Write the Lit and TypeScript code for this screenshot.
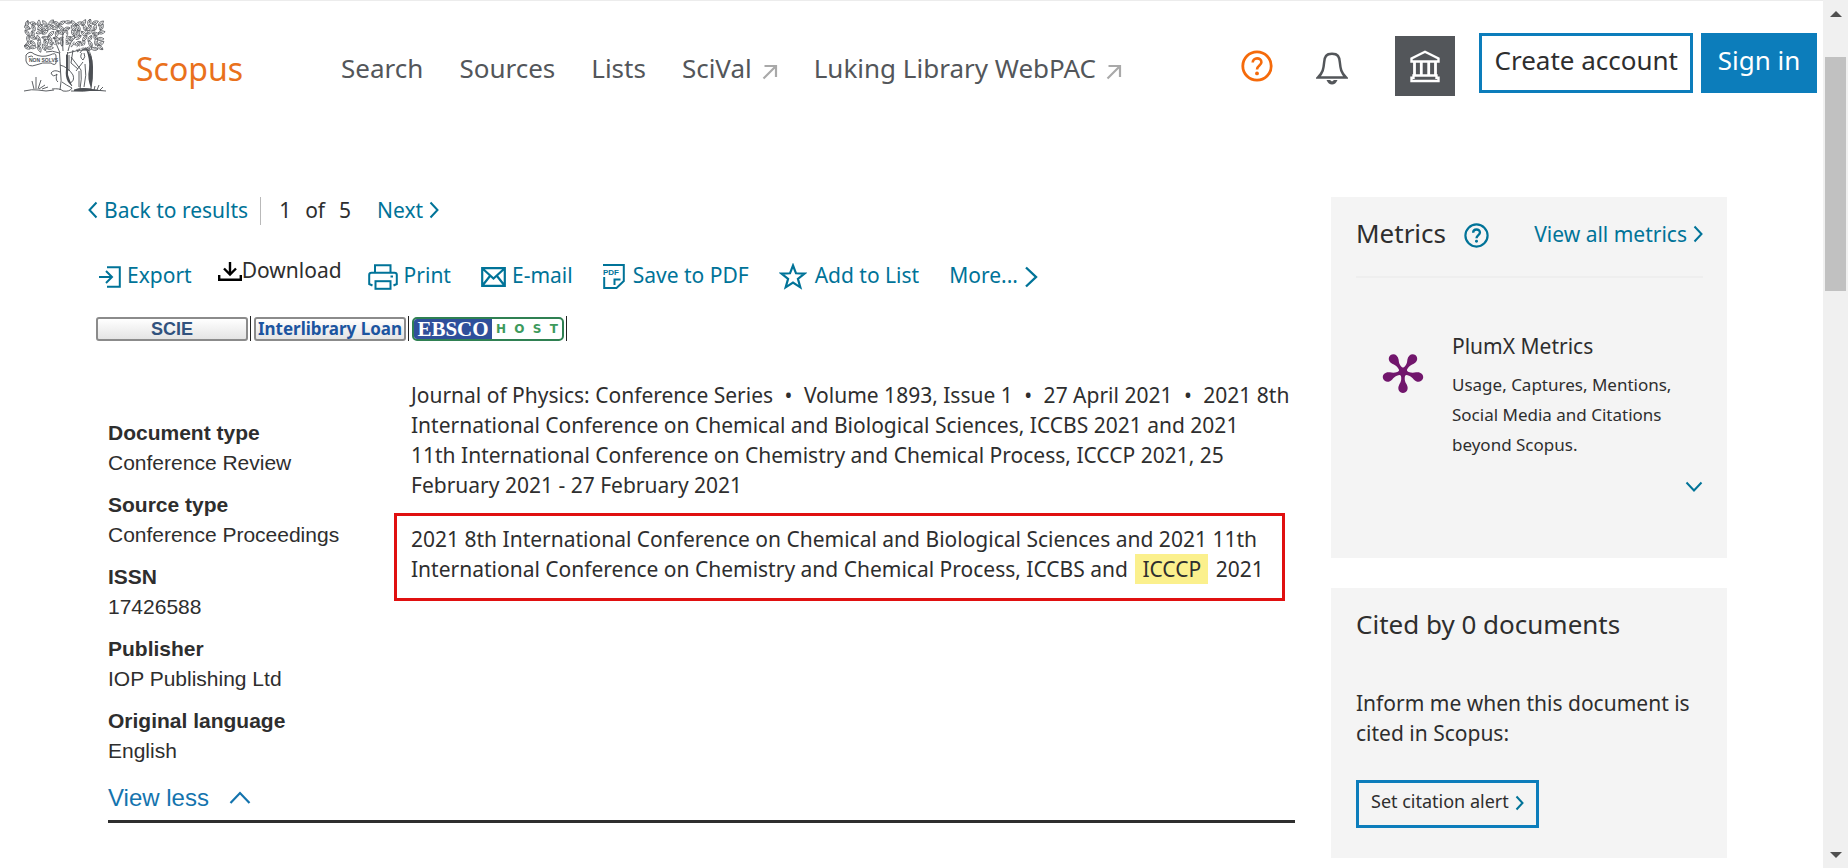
import { LitElement, html, svg, css } from "lit";
import { customElement } from "lit/decorators.js";

const chevron = (d: string, w: number, h: number, width = 2) => html`
  <svg class="icon" width=${w} height=${h} viewBox="0 0 ${w} ${h}" aria-hidden="true">
    <path d=${d} fill="none" stroke="currentColor" stroke-width=${width} />
  </svg>`;
const right = () => chevron("M1.500 1.500 L8.500 9 L1.500 16.500", 10, 18);
const left = () => chevron("M8.500 1.500 L1.500 9 L8.500 16.500", 10, 18);

const outArrow = html`
  <svg class="icon out" width="16" height="16" viewBox="0 0 16 16" aria-hidden="true">
    <path d="M1.500 14.500 L13.500 2.500 M2.500 2 H14 V13" fill="none" stroke="#a9a9a9" stroke-width="2.200" />
  </svg>`;

const helpIcon = (size: number, glyph: number) => html`
  <svg class="icon" width=${size} height=${size} viewBox="0 0 32 32" aria-hidden="true">
    <circle cx="16" cy="16" r="14.200" fill="none" stroke="currentColor" stroke-width="2.800" />
    <path d="M11.700 12.600 C11.700 7 20.400 7 20.400 12.200 C20.400 15.600 16 15.400 16 19.600" fill="none" stroke="currentColor" stroke-width=${glyph} />
    <circle cx="16" cy="23.400" r="1.900" fill="currentColor" />
  </svg>`;

const exportIcon = html`
  <svg class="icon" width="22" height="22" viewBox="0 0 22 22" aria-hidden="true">
    <path d="M8 1.200 H20.800 V20.800 H8 M0 11 H12.500 M7 5 L13 11 L7 17" fill="none" stroke="currentColor" stroke-width="2" />
  </svg>`;
const downloadIcon = html`
  <svg class="icon" width="24" height="20" viewBox="0 0 24 20" aria-hidden="true">
    <path d="M1.200 13 V17.800 H22.800 V13 M12 0 V12 M6 6.500 L12 12.500 L18 6.500" fill="none" stroke="#000" stroke-width="2.400" />
  </svg>`;
const printIcon = html`
  <svg class="icon" width="30" height="26" viewBox="0 0 30 26" aria-hidden="true">
    <path d="M7 8.500 V1.200 H22.500 V8.500 M4.500 21.500 L1.200 20 V11 Q1.200 8.800 3.500 8.800 H26.500 Q28.800 8.800 28.800 11 V20 L25.500 21.500" fill="none" stroke="currentColor" stroke-width="2" />
    <rect x="7.500" y="17.200" width="15" height="7.600" fill="none" stroke="currentColor" stroke-width="2" />
    <rect x="22.500" y="11.500" width="2.500" height="2" fill="currentColor" />
  </svg>`;
const mailIcon = html`
  <svg class="icon" width="25" height="20" viewBox="0 0 25 20" aria-hidden="true">
    <path d="M1.200 1.200 H23.800 V18.800 H1.200 Z M1.500 1.500 L12.500 11.500 L23.500 1.500 M1.500 18.500 L9 9 M23.500 18.500 L16 9" fill="none" stroke="currentColor" stroke-width="2.200" />
  </svg>`;
const pdfIcon = html`
  <svg class="icon" width="22" height="25" viewBox="0 0 22 25" aria-hidden="true">
    <path d="M0 1 H20.800 V17 L13.500 23.900 H1.200 V13 M11.500 21 V15.500 H17.500" fill="none" stroke="currentColor" stroke-width="2" />
    <text x="0" y="10.500" font-family="Liberation Sans, sans-serif" font-weight="700" font-size="8" fill="currentColor">PDF</text>
  </svg>`;
const starIcon = html`
  <svg class="icon" width="28" height="27" viewBox="0 0 28 27" aria-hidden="true">
    <path d="M14 2.500 L17 10.300 L25.500 10.600 L18.900 15.900 L21.300 24.300 L14 19.500 L6.700 24.300 L9.100 15.900 L2.500 10.600 L11 10.300 Z" fill="none" stroke="currentColor" stroke-width="2.200" />
  </svg>`;
const bellIcon = html`
  <svg class="icon" width="32" height="33" viewBox="0 0 32 33" aria-hidden="true">
    <path d="M2 25.500 H30 C25 20.500 24.500 17 23.800 10 C23.300 4.500 22 1.800 16 1.800 C10 1.800 8.700 4.500 8.200 10 C7.500 17 7 20.500 2 25.500 Z" fill="none" stroke="#53565a" stroke-width="2.500" />
    <path d="M10.500 28 H14 L16 29.500 L18 28 H21.500 Q19.500 32.500 16 32.500 Q12.500 32.500 10.500 28 Z" fill="#53565a" />
  </svg>`;
const bankIcon = html`
  <svg class="icon" width="30" height="33" viewBox="0 0 30 33" aria-hidden="true">
    <path d="M1.500 11.500 V8.500 L15 1.800 L28.500 8.500 V11.500 Z" fill="none" stroke="#fff" stroke-width="2.400" />
    <path d="M4.500 12 V25 M11.300 12 V25 M18.700 12 V25 M25.500 12 V25" stroke="#fff" stroke-width="2.800" />
    <path d="M1.500 31 V27.800 H3.500 V25.500 H26.500 V27.800 H28.500 V31 Z" fill="none" stroke="#fff" stroke-width="2.400" />
  </svg>`;

const plumArm = (turn: number) => svg`
  <path transform="rotate(${turn} 21 21)" fill="#71166c"
    d="M17.600 21 C20.400 27 19.200 30.500 17.300 33.500 C14.800 38 17.500 42 21 42 C24.500 42 27.200 38 24.700 33.500 C22.800 30.500 21.600 27 24.400 21 Z" />`;
const plumIcon = html`
  <svg class="plum" width="42" height="43" viewBox="0 0 42 43" aria-hidden="true">
    ${[0, 72, 144, 216, 288].map(plumArm)}
    <circle cx="21" cy="21" r="4.400" fill="#71166c" />
  </svg>`;

const foliage = () => {
  const leaves = [];
  let seed = 7;
  const rnd = () => (seed = (seed * 16807) % 2147483647) / 2147483647;
  for (let row = 0; row < 6; row++) {
    for (let col = 0; col < 14; col++) {
      if (row === 5 && col > 4 && col < 9) continue;
      const x = 3 + col * 5.6 + rnd() * 2;
      const y = 3 + row * 5 + rnd() * 2;
      leaves.push(svg`
        <path transform="translate(${x} ${y}) rotate(${rnd() * 360})" d="M-3.600 0 Q-.5 -3.200 3.600 0 Q-.5 3.200 -3.600 0 M-3 0 H1" />`);
    }
  }
  return leaves;
};
const treeLogo = html`
  <svg class="logo" width="82" height="74" viewBox="0 0 82 74" role="img" aria-label="Elsevier">
    <g fill="#fff" stroke="#4c4f54" stroke-width=".75">${foliage()}</g>
    <g fill="none" stroke="#fff" stroke-width="2">
      <path d="M41 36 Q40 26 41 14 M40 34 Q33 28 30 20 M42 34 Q46 24 52 19 M44 33 Q54 28 62 27" />
    </g>
    <g fill="none" stroke="#4c4f54" stroke-width=".9">
      <path d="M36 71 Q38 62 36.500 52 Q36 42 35.500 34 Q28 31 22 33 M36 34 Q32 25 30 18 M39 32 Q38 22 39 12 M44 32 Q46 22 52 18 M44 34 Q54 30 66 31" />
      <path d="M43.500 33 V54 Q43 62 48 67 M45 36 V52 M36 46 Q44 48 49 56 Q51 62 46 64" />
      <path d="M36 53 Q30 50 27 54 Q29 59 33 55 Q31 61 34 63 M28 70 Q36 69 39 72 Q46 73 48 69 Q42 66 38 63" />
      <path d="M2 36 Q6 31 10 35 Q18 39 26 36 Q32 33 32 37 V44 Q31 47 27 44 Q18 43 12 46 Q4 49 2 42 Z M4 38 Q8 36 9 38" />
      <path d="M56 34 Q60 27 64 31 Q68 35 68 46 Q69 60 67 70 H56 Q58 60 57 51 L47 38 M58 34 Q55 38 59 41 Q62 38 60 34 M59 43 L52 52 M61 45 Q63 56 60 68 M55 52 V68 M49 31 L47 44 L54 50" />
      <path d="M0 72 Q8 70 14 71 Q22 73 30 71 M47 72 Q60 73 70 71 L82 72 M10 70 L8 62 M12 70 V58 M14 70 L17 61 M15 70 L21 66 M18 70 L24 68 M70 71 L71 67 M73 71 L75 66 M76 71 L79 68" />
    </g>
    <path d="M62 30 Q69 36 69 48 Q69 61 67 69 Q63 60 65 50 Q66 40 62 30 Z M42 35 L44 37 V56 L48 67 L44 63 Q41 58 42 50 Z M50 70.500 Q58 68 68 70 L80 72 H50 Z" fill="#4c4f54" />
    <text x="5" y="42.500" font-family="Liberation Sans, sans-serif" font-size="5" font-weight="700" fill="#4c4f54">NON SOLVS</text>
  </svg>`;

@customElement("top-bar")
class TopBar extends LitElement {
  static styles = css`
    :host { display: block; font-family: "Noto Sans", sans-serif; }
    .bar { display: flex; align-items: center; height: 100px; padding: 15px 6px 0 24px; border-top: 1px solid #ececec; }
    .logo { align-self: flex-start; margin: 3px 30px 0 0; }
    .icon { display: block; flex: none; }
    a { color: inherit; text-decoration: none; white-space: nowrap; }
    .brand { color: #e9711c; font-size: 32px; line-height: 40px; padding-top: 5px; }
    nav { display: flex; gap: 36px; margin-left: 98px; padding-top: 4px; color: #53565a; font-size: 26px; line-height: 36px; }
    nav a { display: flex; align-items: center; gap: 10px; }
    .out { margin-top: 8px; }
    .actions { display: flex; align-items: center; margin-left: auto; }
    button { font: inherit; border: 0; background: none; padding: 0; margin: 0; cursor: pointer; }
    .help { color: #f56a0a; margin-right: 43px; }
    .bell { margin-right: 47px; padding-top: 4px; }
    .bank { display: grid; place-items: center; width: 60px; height: 60px; background: #53565a; margin-right: 24px; }
    .account { display: flex; gap: 8px; padding-bottom: 6px; }
    .account button { min-width: 116px; border: 3px solid #0c7dbb; padding: 0 12px 6px; font-size: 26px; line-height: 48px; color: #2e2e2e; white-space: nowrap; }
    .account .primary { background: #0c7dbb; color: #fff; }
  `;
  render() {
    return html`
      <header class="bar">
        ${treeLogo}
        <a class="brand" href="#">Scopus</a>
        <nav>
          <a href="#">Search</a>
          <a href="#">Sources</a>
          <a href="#">Lists</a>
          <a href="#">SciVal ${outArrow}</a>
          <a href="#">Luking Library WebPAC ${outArrow}</a>
        </nav>
        <div class="actions">
          <button class="help" aria-label="Help">${helpIcon(32, 2.6)}</button>
          <button class="bell" aria-label="Notifications">${bellIcon}</button>
          <button class="bank" aria-label="Institution">${bankIcon}</button>
          <div class="account">
            <button>Create account</button>
            <button class="primary">Sign in</button>
          </div>
        </div>
      </header>`;
  }
}

@customElement("document-record")
class DocumentRecord extends LitElement {
  static styles = css`
    :host { display: block; font: 21px/30px "Noto Sans", sans-serif; color: #2e2e2e; }
    a { color: #007398; text-decoration: none; white-space: nowrap; }
    .icon { display: block; flex: none; }
    .pager { display: flex; align-items: center; }
    .pager a { display: flex; align-items: center; gap: 6px; }
    .position { display: flex; gap: 14px; margin: 2px 26px 0 12px; padding-left: 18px; border-left: 1px solid #b9b9b9; }
    .position span { margin-top: -2px; }
    .tools { display: flex; align-items: center; gap: 30px; margin-top: 35px; padding-left: 11px; }
    .tools a { display: flex; align-items: center; gap: 6px; }
    .tools .wide { gap: 8px; }
    .tools a .icon { margin-top: 3px; }
    .tools .download { color: #2e2e2e; gap: 0; margin: -10px -4px 0; }
    .badges { display: flex; margin-top: 26px; padding-left: 8px; gap: 3px; }
    .slot { display: flex; align-items: center; gap: 2px; height: 25px; }
    .slot::after { content: ""; width: 1px; height: 25px; background: #222; }
    .badge { box-sizing: border-box; width: 152px; height: 24px; border: 2px solid #8b8b8b; border-radius: 3px; background: linear-gradient(#fff, #e4e4e4); text-align: center; line-height: 20px; font-weight: 700; }
    .scie { font-family: "Liberation Sans", sans-serif; font-size: 18px; color: #31527e; }
    .loan { font-size: 17px; color: #1c55a0; }
    .ebsco { display: flex; border-color: #2f8052; border-radius: 5px; padding: 0; background: #fff; overflow: hidden; }
    .ebsco .name { width: 78px; background: #2f4f9b; color: #fff; font: 700 21px/20px "Liberation Serif", serif; }
    .ebsco .host { flex: 1; display: flex; justify-content: space-between; padding: 0 4px; color: #3d9a5c; font: 700 12px/20px "DejaVu Sans", sans-serif; }
    .details { display: grid; grid-template-columns: 303px minmax(0, 1fr); margin: 39px 0 0 20px; padding-bottom: 7px; border-bottom: 3px solid #2e2e2e; }
    .meta { margin: 0; padding-top: 38px; display: grid; gap: 12px; font: 21px/30px "Liberation Sans", sans-serif; }
    dt { font-weight: 700; }
    dd { margin: 0; }
    .less { display: flex; align-items: center; gap: 20px; margin-top: 17px; padding: 0; border: 0; background: none; color: #1474ae; font: 24px/30px "Liberation Sans", sans-serif; cursor: pointer; }
    p { margin: 0; white-space: nowrap; }
    .dot { margin: 0 6px; }
    .highlighted { margin: 13px 10px 0 -17px; padding: 8px 12px 14px 14px; border: 3px solid #e01010; }
    mark { background: #fbf08d; color: inherit; margin: 0 2px; padding: 0 7px; display: inline-block; line-height: 30px; }
  `;
  render() {
    const meta = [
      ["Document type", "Conference Review"],
      ["Source type", "Conference Proceedings"],
      ["ISSN", "17426588"],
      ["Publisher", "IOP Publishing Ltd"],
      ["Original language", "English"],
    ];
    const dot = html`<span class="dot">•</span>`;
    return html`
      <div class="pager">
        <a href="#">${left()}Back to results</a>
        <div class="position"><span>1</span><span>of</span><span>5</span></div>
        <a href="#">Next${right()}</a>
      </div>
      <div class="tools">
        <a href="#">${exportIcon}Export</a>
        <a class="download" href="#">${downloadIcon}Download</a>
        <a href="#">${printIcon}Print</a>
        <a href="#">${mailIcon}E-mail</a>
        <a class="wide" href="#">${pdfIcon}Save to PDF</a>
        <a class="wide" href="#">${starIcon}Add to List</a>
        <a href="#">More...${chevron("M2 1.500 L12 11 L2 20.500", 14, 22, 2.4)}</a>
      </div>
      <div class="badges">
        <div class="slot"><a class="badge scie" href="#">SCIE</a></div>
        <div class="slot"><a class="badge loan" href="#">Interlibrary Loan</a></div>
        <div class="slot">
          <a class="badge ebsco" href="#" aria-label="EBSCO HOST">
            <span class="name">EBSCO</span>
            <span class="host">${[..."HOST"].map((c) => html`<span>${c}</span>`)}</span>
          </a>
        </div>
      </div>
      <div class="details">
        <div>
          <dl class="meta">
            ${meta.map(([k, v]) => html`<div><dt>${k}</dt><dd>${v}</dd></div>`)}
          </dl>
          <button class="less">View less ${chevron("M1.500 12 L11 2 L20.500 12", 22, 14, 2.2)}</button>
        </div>
        <div>
          <p>
            Journal of Physics: Conference Series ${dot} Volume 1893, Issue 1 ${dot} 27 April 2021 ${dot} 2021 8th<br />
            International Conference on Chemical and Biological Sciences, ICCBS 2021 and 2021<br />
            11th International Conference on Chemistry and Chemical Process, ICCCP 2021, 25<br />
            February 2021 - 27 February 2021
          </p>
          <p class="highlighted">
            2021 8th International Conference on Chemical and Biological Sciences and 2021 11th<br />
            International Conference on Chemistry and Chemical Process, ICCBS and <mark>ICCCP</mark> 2021
          </p>
        </div>
      </div>`;
  }
}

@customElement("metrics-rail")
class MetricsRail extends LitElement {
  static styles = css`
    :host { display: grid; gap: 30px; align-content: start; font: 21px/30px "Noto Sans", sans-serif; color: #2e2e2e; }
    section { background: #f4f4f4; padding: 18px 24px 30px 25px; }
    .icon { display: block; flex: none; }
    a { color: #007398; text-decoration: none; white-space: nowrap; }
    button { font: inherit; color: inherit; background: none; border: 0; padding: 0; cursor: pointer; }
    h2, h3, p { margin: 0; font-weight: 400; }
    h2 { font-size: 26px; line-height: 36px; }
    .head { display: flex; align-items: center; padding-bottom: 25px; border-bottom: 2px solid #eeeeee; }
    .help { color: #007398; margin-left: 18px; padding-top: 4px; }
    .all { display: flex; align-items: center; gap: 6px; margin-left: auto; padding-top: 2px; }
    .plumx { display: flex; padding: 53px 0 21px 26px; }
    .plum { flex: none; margin: 20px 28px 0 0; }
    h3 { font-size: 21px; line-height: 30px; margin-bottom: 9px; }
    .note { font-size: 17px; max-width: 224px; }
    .expand { display: block; margin: 0 0 36px auto; color: #007398; }
    .inform { margin: 46px 0 32px; }
    .alert { display: flex; align-items: center; gap: 6px; border: 3px solid #0c7dbb; padding: 3px 12px 9px; font-size: 18px; }
    .alert .icon { color: #007398; margin-top: 3px; }
  `;
  render() {
    return html`
      <section>
        <div class="head">
          <h2>Metrics</h2>
          <button class="help" aria-label="About metrics">${helpIcon(25, 3)}</button>
          <a class="all" href="#">View all metrics${right()}</a>
        </div>
        <div class="plumx">
          ${plumIcon}
          <div>
            <h3>PlumX Metrics</h3>
            <p class="note">Usage, Captures, Mentions, Social Media and Citations beyond Scopus.</p>
          </div>
        </div>
        <button class="expand" aria-label="Expand">${chevron("M1.500 1.500 L9 9.500 L16.500 1.500", 18, 11)}</button>
      </section>
      <section>
        <h2>Cited by 0 documents</h2>
        <p class="inform">Inform me when this document is cited in Scopus:</p>
        <button class="alert">Set citation alert${chevron("M1.500 1.500 L7.500 8 L1.500 14.500", 9, 16)}</button>
      </section>`;
  }
}

@customElement("app-root")
class AppRoot extends LitElement {
  static styles = css`
    :host { display: flex; height: 100vh; overflow: hidden; background: #fff; }
    .page { flex: 1; min-width: 0; }
    main { display: grid; grid-template-columns: minmax(0, 1fr) 396px; gap: 36px; padding: 79px 96px 0 88px; }
    metrics-rail { padding-top: 2px; }
    .track { display: flex; flex-direction: column; align-items: center; width: 25px; background: #f0f0f0; }
    .arrow { margin: 11px 0; }
    .thumb { width: 21px; height: 27%; margin-top: 29px; background: #c1c1c1; }
    .down { margin-top: auto; margin-bottom: 10px; }
  `;
  render() {
    return html`
      <div class="page">
        <top-bar></top-bar>
        <main>
          <document-record></document-record>
          <metrics-rail></metrics-rail>
        </main>
      </div>
      <div class="track" aria-hidden="true">
        <svg class="arrow" width="12" height="6" viewBox="0 0 12 6"><path d="M0 6 L6 0 L12 6 Z" fill="#505050" /></svg>
        <div class="thumb"></div>
        <svg class="arrow down" width="12" height="6" viewBox="0 0 12 6"><path d="M0 0 L6 6 L12 0 Z" fill="#505050" /></svg>
      </div>`;
  }
}
